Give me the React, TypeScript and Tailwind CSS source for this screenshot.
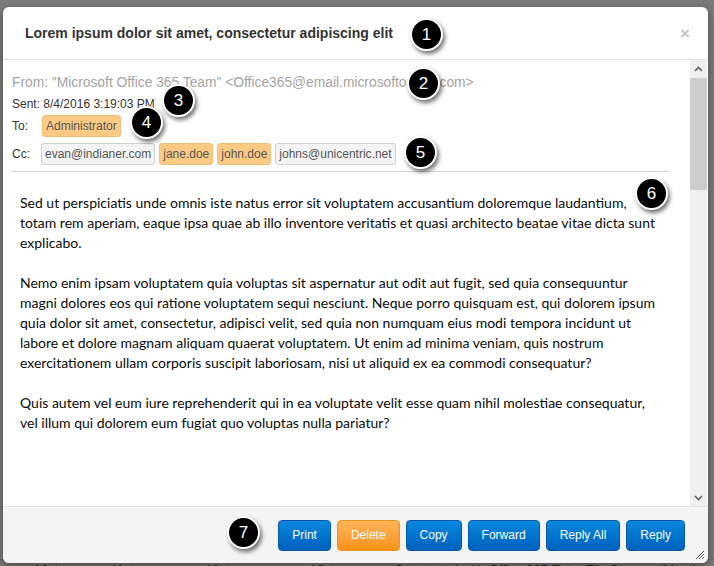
import React from "react";

const paragraphs: string[][] = [
  [
    "Sed ut perspiciatis unde omnis iste natus error sit voluptatem accusantium doloremque laudantium,",
    "totam rem aperiam, eaque ipsa quae ab illo inventore veritatis et quasi architecto beatae vitae dicta sunt",
    "explicabo.",
  ],
  [
    "Nemo enim ipsam voluptatem quia voluptas sit aspernatur aut odit aut fugit, sed quia consequuntur",
    "magni dolores eos qui ratione voluptatem sequi nesciunt. Neque porro quisquam est, qui dolorem ipsum",
    "quia dolor sit amet, consectetur, adipisci velit, sed quia non numquam eius modi tempora incidunt ut",
    "labore et dolore magnam aliquam quaerat voluptatem. Ut enim ad minima veniam, quis nostrum",
    "exercitationem ullam corporis suscipit laboriosam, nisi ut aliquid ex ea commodi consequatur?",
  ],
  [
    "Quis autem vel eum iure reprehenderit qui in ea voluptate velit esse quam nihil molestiae consequatur,",
    "vel illum qui dolorem eum fugiat quo voluptas nulla pariatur?",
  ],
];

const Tag = ({ label, orange }: { label: string; orange?: boolean }) => (
  <span
    className={`h-[22px] px-[3px] flex items-center rounded-[3px] border text-[12px] text-[#555] ${
      orange ? "bg-[#fdca84] border-[#f0bd78]" : "bg-[#f4f4f4] border-[#cfcfcf]"
    }`}
  >
    {label}
  </span>
);

const Btn = ({ label, orange }: { label: string; orange?: boolean }) => (
  <button
    className={`h-[31px] px-[13px] rounded-[4px] border text-[12px] text-white ${
      orange
        ? "bg-gradient-to-b from-[#ffb357] to-[#f7930f] border-[#e89420]"
        : "bg-gradient-to-b from-[#0b87dc] to-[#0061bf] border-[#0559a8]"
    }`}
  >
    {label}
  </button>
);

// numbered annotation bubble
const Mark = ({ n, x, y }: { n: number; x: number; y: number }) => (
  <div
    className="absolute w-[33px] h-[33px] rounded-full bg-black border-2 border-white shadow-[2px_3px_4px_rgba(0,0,0,0.55)] flex items-center justify-center text-white text-[17px] font-['Liberation_Sans',sans-serif]"
    style={{ left: x - 16, top: y - 16 }}
  >
    {n}
  </div>
);

export default function App() {
  return (
    <div className="relative w-[714px] h-[566px] overflow-hidden bg-[#7a7a7a] font-['Liberation_Sans',sans-serif]">
      {/* dimmed page underneath */}
      <div className="flex flex-col h-full justify-end">
        <div className="h-[20px] -mb-[13px] flex items-start text-[13px] text-[#1e1e1e] border-t border-[#6a6a6a]">
          <span className="w-[62px] text-right pr-[8px] border-r border-[#666]">10</span>
          <span className="w-[80px] text-right pr-[6px] border-r border-[#666]">11</span>
          <span className="w-[104px] text-right pr-[6px] border-r border-[#666]">12</span>
          <span className="w-[114px] text-right pr-[6px] border-r border-[#666]">13</span>
          <span className="w-[60px] border-r border-[#666]"></span>
          <span className="pl-[8px] whitespace-nowrap">Get started with Office 365 Extra File Storage (Month to</span>
        </div>
      </div>

      {/* modal */}
      <div className="absolute left-[3px] top-[7px] w-[705px] h-[556px] bg-white rounded-[6px] flex flex-col shadow-[0_3px_9px_rgba(0,0,0,0.4)]">
        <div className="h-[53px] shrink-0 flex items-center justify-between pl-[22px] pr-[18px] border-b border-[#e2e2e2]">
          <span className="text-[14px] font-bold text-[#333]">
            Lorem ipsum dolor sit amet, consectetur adipiscing elit
          </span>
          <span className="text-[17px] font-bold text-[#c4c4c4] leading-none">×</span>
        </div>

        <div className="flex flex-1 min-h-0">
          <div className="flex-1 pl-[9px] pr-[21px] pt-[13px] overflow-hidden">
            <div className="h-[20px] flex items-center text-[13.8px] text-[#a3a3a3] whitespace-nowrap">
              From: "Microsoft Office 365 Team" &lt;Office365@email.microsoftonline.com&gt;
            </div>
            <div className="h-[16px] mt-[3px] flex items-center text-[12px] text-[#333]">
              Sent: 8/4/2016 3:19:03 PM
            </div>
            <div className="flex items-center mt-[3px] text-[12px] text-[#333]">
              <span className="w-[30px]">To:</span>
              <Tag label="Administrator" orange />
            </div>
            <div className="flex items-center gap-[4px] mt-[6px] text-[12px] text-[#333]">
              <span className="w-[25px]">Cc:</span>
              <Tag label="evan@indianer.com" />
              <Tag label="jane.doe" orange />
              <Tag label="john.doe" orange />
              <Tag label="johns@unicentric.net" />
            </div>
            <div className="mt-[6px] border-t border-[#d0d0d0]" />
            <div className="pl-[8px] pt-[21px] text-[14px] leading-[20px] text-[#0a0a0a] font-['Lato',sans-serif] flex flex-col gap-[20px]">
              {paragraphs.map((lines, i) => (
                <p key={i}>
                  {lines.map((l) => (
                    <span key={l} className="block whitespace-nowrap">
                      {l}
                    </span>
                  ))}
                </p>
              ))}
            </div>
          </div>

          {/* scrollbar */}
          <div className="w-[17px] mr-[1px] bg-[#f0f0f0] flex flex-col">
            <div className="h-[18px] flex items-center justify-center">
              <svg width="9" height="6" viewBox="0 0 9 6">
                <path d="M1 5 L4.5 1.5 L8 5" stroke="#606060" strokeWidth="1.6" fill="none" />
              </svg>
            </div>
            <div className="h-[112px] bg-[#cdcdcd]" />
            <div className="flex-1" />
            <div className="h-[17px] flex items-center justify-center">
              <svg width="9" height="6" viewBox="0 0 9 6">
                <path d="M1 1 L4.5 4.5 L8 1" stroke="#606060" strokeWidth="1.6" fill="none" />
              </svg>
            </div>
          </div>
        </div>

        <div className="relative h-[57px] shrink-0 border-t border-[#e2e2e2] bg-[#f4f4f4] rounded-b-[6px] flex items-center justify-end gap-[6px] pr-[23px]">
          <Btn label="Print" />
          <Btn label="Delete" orange />
          <Btn label="Copy" />
          <Btn label="Forward" />
          <Btn label="Reply All" />
          <Btn label="Reply" />
          <svg className="absolute right-[3px] bottom-[3px]" width="11" height="11" viewBox="0 0 11 11">
            <path d="M10 2 L2 10 M10 5 L5 10 M10 8 L8 10" stroke="#555" strokeWidth="1" />
          </svg>
        </div>
      </div>

      <Mark n={1} x={426} y={34} />
      <Mark n={2} x={423} y={83} />
      <Mark n={3} x={178} y={100} />
      <Mark n={4} x={146} y={122} />
      <Mark n={5} x={420} y={152} />
      <Mark n={6} x={651} y={193} />
      <Mark n={7} x={243} y={532} />
    </div>
  );
}
